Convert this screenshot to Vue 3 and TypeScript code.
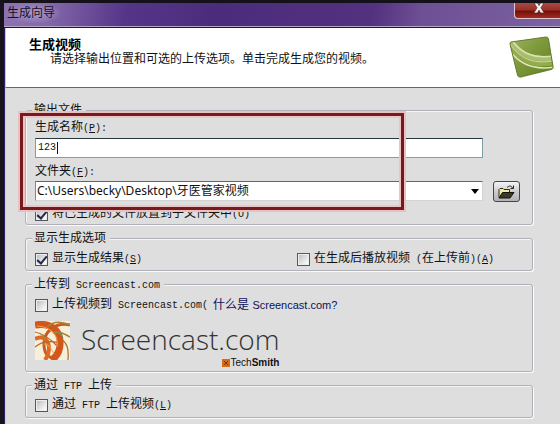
<script setup lang="ts">
import { ref } from 'vue'

const productionName = ref<string>('123')
const folders: string[] = ['C:\\Users\\becky\\Desktop\\牙医管家视频']
const folder = ref<string>(folders[0])
const useSubfolder = ref<boolean>(true)
const showResults = ref<boolean>(true)
const playAfter = ref<boolean>(false)
const uploadScreencast = ref<boolean>(false)
const uploadFtp = ref<boolean>(false)
</script>

<template>
  <div class="window">
    <header class="titlebar">
      <span class="caption">生成向导</span>
      <button class="close" type="button" aria-label="关闭">
        <svg width="12" height="11" viewBox="0 0 12 11" aria-hidden="true">
          <path d="M1 0h3.6L6 2.500 7.400 0H11L8 4.700 11.200 10H7.500L6 7.200 4.500 10H.8L4 4.700z" fill="#f6eeee" stroke="#57211f" stroke-width=".7" />
        </svg>
      </button>
    </header>

    <main class="client">
      <section class="intro">
        <div class="intro-text">
          <h1>生成视频</h1>
          <p>请选择输出位置和可选的上传选项。单击完成生成您的视频。</p>
        </div>
        <svg class="product" width="48" height="46" viewBox="0 0 48 46" aria-hidden="true">
          <defs>
            <linearGradient id="leaf" x1="0" y1="0" x2="1" y2="1">
              <stop offset="0" stop-color="#a3b86c" />
              <stop offset=".45" stop-color="#7f9a3c" />
              <stop offset="1" stop-color="#5e7d1c" />
            </linearGradient>
            <clipPath id="tile"><path d="M4 9 39 4Q41 4 41.500 6L46 34Q46 36 44 36.500L13 44Q11 44 10.500 42L3 11Q3 9 4 9z" /></clipPath>
          </defs>
          <path d="M5 11 41 5 47.500 36 13 45.500z" fill="#dfe5c5" />
          <g clip-path="url(#tile)">
            <path d="M0 0h48v46H0z" fill="url(#leaf)" />
            <path d="M3 10C12 24 25 30 47 28V23C27 25 16 19 8 9z" fill="#a9bd70" />
            <path d="M3 15C12 31 29 36 47 32v-3C27 31 14 24 3 12z" fill="#93ab50" />
            <path d="M6 9C15 20 26 26 46 23" fill="none" stroke="#d9e3ac" stroke-width="1.500" />
            <path d="M3 11C14 27 28 31 47 28" fill="none" stroke="#c4d290" stroke-width="1.200" />
            <path d="M3 18C14 33 29 37 47 34" fill="none" stroke="#e0e8bb" stroke-width="1.500" />
          </g>
          <path d="M4 9 39 4Q41 4 41.500 6L46 34Q46 36 44 36.500L13 44Q11 44 10.500 42L3 11Q3 9 4 9z" fill="none" stroke="#647b2d" />
        </svg>
      </section>

      <form class="options" @submit.prevent>
        <fieldset class="output">
          <legend>输出文件</legend>
          <div class="fields">
            <label for="name">生成名称<span class="latin">(<u>P</u>):</span></label>
            <input id="name" v-model="productionName" class="name latin" type="text" />
            <label for="folder" class="folder-label">文件夹<span class="latin">(<u>F</u>):</span></label>
            <span class="combo">
              <select id="folder" v-model="folder">
                <option v-for="f in folders" :key="f" :value="f">{{ f }}</option>
              </select>
              <svg class="arrow" width="8" height="5" viewBox="0 0 8 5" aria-hidden="true"><path d="M0 0h8L4 5z" /></svg>
            </span>
            <button class="browse" type="button" aria-label="浏览文件夹">
              <svg width="17" height="14" viewBox="0 0 17 14" aria-hidden="true">
                <path d="M1 12.500V4.500l1-1h3l1 1h5.500v3" fill="#f2eba8" stroke="#2c2b18" />
                <path d="M1 13 4.500 7.500H16L12 13z" fill="#3d3a20" stroke="#15150c" />
                <path d="M9 2.500C11 .5 13.500.5 14.500 3M12.500 3.500h3v-3" fill="none" stroke="#222" />
              </svg>
            </button>
          </div>
          <label class="check sub"><input v-model="useSubfolder" type="checkbox" /><span>将已生成的文件放置到子文件夹中<span class="latin">(O)</span></span></label>
          <div class="highlight"></div>
        </fieldset>

        <fieldset class="display">
          <legend>显示生成选项</legend>
          <div class="pair">
            <label class="check"><input v-model="showResults" type="checkbox" /><span>显示生成结果<span class="latin">(<u>S</u>)</span></span></label>
            <label class="check"><input v-model="playAfter" type="checkbox" /><span>在生成后播放视频<span class="latin"> (</span>在上传前<span class="latin">)(<u>A</u>)</span></span></label>
          </div>
        </fieldset>

        <fieldset class="screencast">
          <legend>上传到<span class="latin"> Screencast.com</span></legend>
          <div class="upload">
            <label class="check"><input v-model="uploadScreencast" type="checkbox" /><span>上传视频到<span class="latin"> Screencast.com(</span></span></label>
            <a href="#screencast">什么是 <span class="site">Screencast.com?</span></a>
          </div>
          <div class="brand">
            <svg class="mark" width="35" height="39" viewBox="0 0 35 39" aria-hidden="true">
              <path d="M0 0h35v39H0z" fill="#f6efd9" />
              <g fill="none">
                <path d="M0 4C16 1 26 10 25 23 25 31 22 35 17 39" stroke="#d4561b" stroke-width="7" />
                <path d="M35 4C21 1 9 10 9 23c0 9 3 12 9 15" stroke="#c95a20" stroke-width="3" />
                <path d="M0 18c8-4 13 0 14 8 0 6-1 9-4 13" stroke="#dc6a24" stroke-width="4" />
                <path d="M12 6C18 0 26 0 35 4M18 12c6-2 10 0 17 4" stroke="#aa8432" stroke-width="1.500" />
                <path d="M0 11c9 2 15 6 22 14M0 26c7-6 14-7 24-4M26 18c6 4 8 9 7 21" stroke="#b56a25" stroke-width="1.200" />
                <path d="M20 10q5 2 8 6M4 12l6 4" stroke="#78955a" />
                <path d="M2 5c14 1 22 9 20 21M9 23q5-1 10 10" stroke="#f2a257" stroke-width="1" />
              </g>
            </svg>
            <div class="wordmark">
              <span class="big">Screencast.com</span>
              <span class="maker">
                <svg width="8" height="8" viewBox="0 0 8 8" aria-hidden="true"><path d="M0 0h8v8H0z" fill="#d66a16" /><path d="m2 2 4 4m0-4L2 6" stroke="#7d3609" /></svg>
                <span>Tech<b>Smith</b></span>
              </span>
            </div>
          </div>
        </fieldset>

        <fieldset>
          <legend>通过<span class="latin"> FTP </span>上传</legend>
          <label class="check"><input v-model="uploadFtp" type="checkbox" /><span>通过<span class="latin"> FTP </span>上传视频<span class="latin">(<u>L</u>)</span></span></label>
        </fieldset>
      </form>
    </main>
  </div>
</template>

<style>
body {
  margin: 0;
  background: #dedede;
}
</style>

<style scoped>
* {
  box-sizing: border-box;
}

.window {
  display: flex;
  flex-direction: column;
  min-height: 100vh;
  border-top: 3px solid #14111a;
  border-left: 4px solid #17141c;
  background: #dedede;
  color: #111;
  font: 12px/14px "Liberation Sans", "Noto Sans CJK SC", sans-serif;
}

.latin {
  font-family: "Liberation Mono", monospace;
  font-size: 10px;
  white-space: pre;
}

.titlebar {
  display: flex;
  justify-content: space-between;
  align-items: flex-start;
  height: 24px;
  padding-left: 3px;
  background: linear-gradient(100deg, #8c74b0 0, #8469aa 8%, #553588 22%, #4b2c7c 38%, #52317f 66%, #6e5094 75%, #7b62a1 100%);
}

.caption {
  padding: 3px 5px 3px 0;
  color: #17101f;
  background: radial-gradient(ellipse, #ad9dca 0, #9d8abf88 50%, transparent 75%);
}

.close {
  display: flex;
  justify-content: center;
  width: 46px;
  height: 16px;
  padding: 0 0 0 3px;
  border: 1px solid #ddc5d0;
  border-width: 0 0 1px 1px;
  border-radius: 0 0 0 4px;
  background: linear-gradient(#a84a43 0, #9a3029 45%, #741009 55%, #a52a1f 100%);
}

.client {
  flex: 1;
  border-top: 1px solid #21133c;
  border-left: 1px solid #33205e;
  box-shadow: 0 -1px 0 #b5a6ca;
}

.intro {
  display: flex;
  justify-content: space-between;
  height: 60px;
  padding: 9px 5px 0 23px;
  border-left: 1px solid #c9c2da;
  border-bottom: 1px solid #686868;
  background: #fff;
}

h1 {
  margin: 0;
  font-size: 13px;
  line-height: 15px;
  color: #000;
}

.intro p {
  margin: 0;
  padding-left: 21px;
}

.product {
  flex: none;
  margin-top: -4px;
}

.options {
  display: flex;
  flex-direction: column;
  gap: 6px;
  padding: 15px 27px 7px 19px;
  border-left: 1px solid #d2cde0;
}

fieldset {
  min-width: 0;
  margin: 0;
  padding: 6px 12px 5px 9px;
  border: 1px solid #b1b0b8;
  border-radius: 3px;
  box-shadow: 1px 1px 0 #fafafa, inset 1px 1px 0 #f6f6f8;
}

legend {
  margin-left: -3px;
  padding: 0 4px 0 2px;
  height: 14px;
  background: #dedede;
}

.output {
  position: relative;
  padding-top: 3px;
  padding-bottom: 3px;
}

.display {
  padding-top: 7px;
  padding-bottom: 4px;
}

.screencast {
  padding-bottom: 2px;
}

.fields {
  display: grid;
  grid-template-columns: 1fr 27px;
  column-gap: 10px;
  align-items: start;
}

.fields label {
  grid-column: 1 / -1;
  height: 18px;
}

.fields .folder-label {
  height: 17px;
  margin-top: 6px;
}

/* The thin bar in the background stands for the text cursor at rest. */
.name {
  width: 100%;
  height: 20px;
  padding: 0 2px 1px;
  border: 1px solid #7ba0aa;
  border-top-color: #24383d;
  border-radius: 0;
  outline: 0;
  background: #fff linear-gradient(#111, #111) 21px 3px / 1px 12px no-repeat;
  color: #111;
}

.name:focus {
  background-image: none;
}

.combo {
  display: grid;
  align-items: center;
}

.combo > * {
  grid-area: 1 / 1;
}

select {
  width: 100%;
  height: 20px;
  padding: 0 16px 1px 1px;
  border: 1px solid #d3d3d3;
  border-top-color: #606569;
  border-left-color: #85898c;
  border-radius: 0;
  appearance: none;
  background: #fff;
  color: #111;
  font-family: "Noto Sans", "Noto Sans CJK SC", sans-serif;
  font-size: 12px;
}

.arrow {
  justify-self: end;
  margin-right: 4px;
  pointer-events: none;
}

.browse {
  display: flex;
  align-items: center;
  justify-content: center;
  height: 21px;
  padding: 0;
  border: 1px solid #46464b;
  border-radius: 3px;
  background: linear-gradient(#f4f4f4, #c9c9cd 55%, #b2b2b8);
}

.check {
  display: flex;
  align-items: center;
  gap: 4px;
  height: 14px;
  white-space: nowrap;
}

.check input {
  display: grid;
  place-items: center;
  width: 13px;
  height: 13px;
  margin: 0;
  appearance: none;
  border: 1px solid #55585c;
  background: linear-gradient(135deg, #b5b8bd, #f7f7f7 80%);
  box-shadow: inset 0 0 0 1px #eee;
}

.check input:checked::after {
  content: "";
  width: 4px;
  height: 8px;
  margin-bottom: 2px;
  border: solid #23274c;
  border-width: 0 2px 2px 0;
  transform: rotate(40deg);
}

.sub {
  margin-top: 5px;
}

/* Red call-out frame laid over the name and folder fields. */
.highlight {
  position: absolute;
  top: -4px;
  left: -6px;
  right: 128px;
  height: 97px;
  border: 3px solid #761a1d;
  box-shadow: 0 0 0 2px #e9bfc0, inset 0 0 0 2px #ecc4c5;
  pointer-events: none;
}

.pair {
  display: grid;
  grid-template-columns: 54fr 46fr;
}

.upload {
  display: flex;
  gap: 5px;
  padding-top: 1px;
}

a {
  color: #10105a;
  text-decoration: none;
  white-space: nowrap;
}

.site {
  font-size: 11px;
}

.brand {
  display: flex;
  gap: 11px;
  padding-top: 9px;
}

.mark {
  flex: none;
}

.wordmark {
  display: flex;
  flex-direction: column;
  align-items: flex-end;
}

.big {
  color: #333;
  font: 300 28px/36px "Open Sans", sans-serif;
}

.maker {
  display: flex;
  align-items: center;
  gap: 1px;
  font-size: 10px;
  line-height: 12px;
}
</style>
